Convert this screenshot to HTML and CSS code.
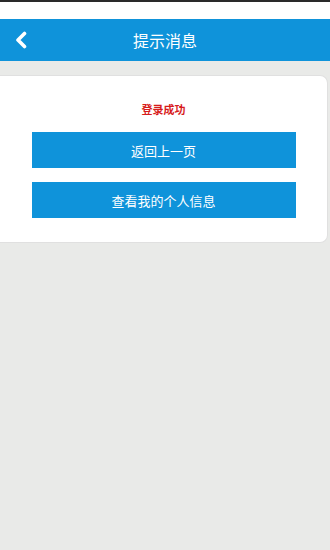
FILE: index.html
```html
<!DOCTYPE html>
<html lang="zh">
<head>
<meta charset="utf-8">
<title>提示消息</title>
<link rel="stylesheet" href="styles.css">
</head>
<body>
<div class="topline"></div>
<div class="statusbar"></div>
<header class="header">
  <span class="back">
    <svg width="14" height="18" viewBox="0 0 14 18"><polyline points="10.5,2.5 4,9 10.5,15.5" fill="none" stroke="#fff" stroke-width="3.6" stroke-linecap="round" stroke-linejoin="round"/></svg>
  </span>
  <h1 class="title">提示消息</h1>
</header>
<main class="main">
  <section class="card">
    <p class="msg">登录成功</p>
    <a class="btn">返回上一页</a>
    <a class="btn">查看我的个人信息</a>
  </section>
</main>
</body>
</html>
```
FILE: styles.css
```css
html, body {
  margin: 0;
  padding: 0;
  height: 100%;
}
body {
  background: #e9eae8;
  font-family: "Noto Sans CJK SC", "Noto Sans", sans-serif;
}
.topline {
  height: 2px;
  background: #2a2a2a;
}
.statusbar {
  height: 17px;
  background: #ffffff;
}
.header {
  position: relative;
  height: 42px;
  background: #0f93da;
  display: flex;
  align-items: center;
  justify-content: center;
}
.back {
  position: absolute;
  left: 14px;
  top: 12px;
  display: flex;
}
.title {
  margin: 0;
  font-size: 16px;
  font-weight: normal;
  color: #ffffff;
  line-height: 20px;
}
.main {
  padding: 14px 2px 0 0;
}
.card {
  background: #ffffff;
  border: 1px solid #e0e0e0;
  border-left: none;
  border-radius: 0 8px 8px 0;
  padding: 24px 0 24px;
  display: flex;
  flex-direction: column;
  align-items: center;
  gap: 14px;
}
.msg {
  margin: 0;
  font-size: 11px;
  line-height: 18px;
  font-weight: bold;
  color: #d71c1c;
}
.btn {
  display: flex;
  align-items: center;
  justify-content: center;
  width: 264px;
  height: 36px;
  background: #0f93da;
  color: #ffffff;
  font-size: 13px;
}
```
